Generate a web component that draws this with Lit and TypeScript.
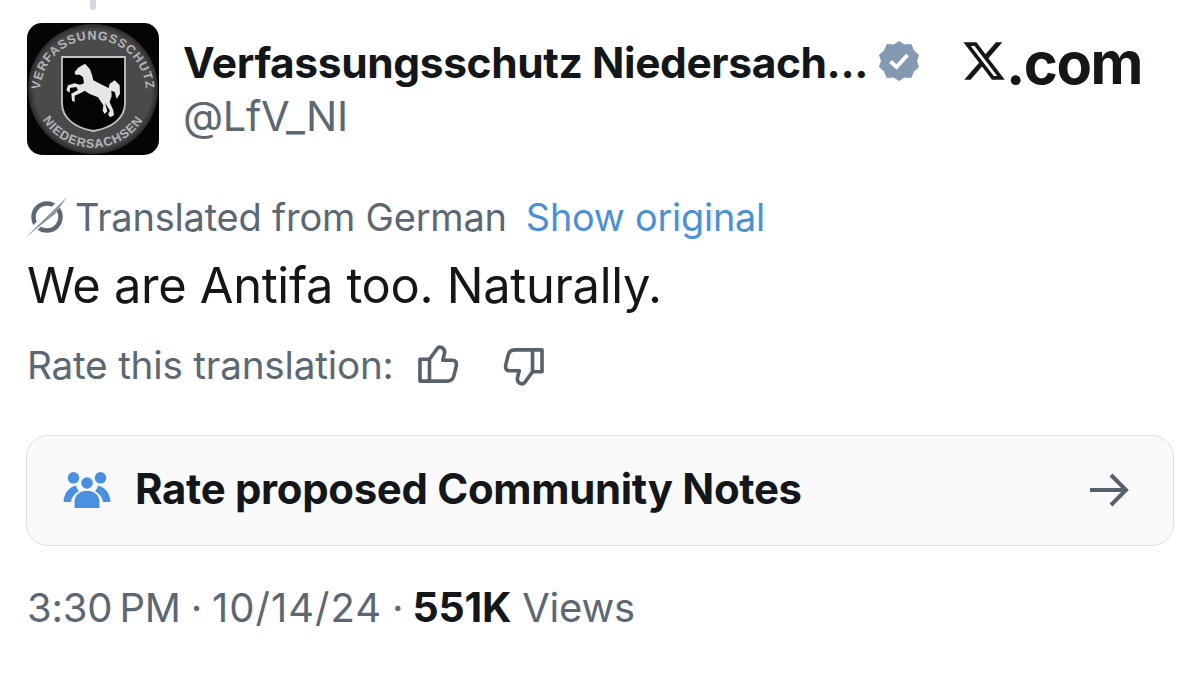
import { LitElement, html, css } from "lit";
import { customElement } from "lit/decorators.js";

const avatar = html`<svg class="avatar" viewBox="0 0 132 132" width="132" height="132">
  <defs>
    <path id="arcTop" d="M 15 84 A 53 53 0 1 1 117 84" />
    <path id="arcBottom" d="M 9 81 A 59 59 0 0 0 123 81" />
    <radialGradient id="disc"><stop offset="0" stop-color="#4a4a4c"/><stop offset=".9" stop-color="#4a4a4c"/><stop offset="1" stop-color="#2a2a2b"/></radialGradient>
  </defs>
  <rect width="132" height="132" rx="15" fill="#050505"/>
  <circle cx="66" cy="66" r="65" fill="url(#disc)"/>
  <text class="ring"><textPath href="#arcTop" startOffset="50%" text-anchor="middle">VERFASSUNGSSCHUTZ</textPath></text>
  <text class="ring"><textPath href="#arcBottom" startOffset="50%" text-anchor="middle">NIEDERSACHSEN</textPath></text>
  <path d="M35 34 H98 V80 C98 96 84 105 66.500 108 C49 105 35 96 35 80 Z" fill="#040404" stroke="#c4c4c4" stroke-width="1.800"/>
  <path transform="translate(31 29) scale(.3333)" fill="#e6e6e6" d="M52 68 L50 60 L60 48 L75 38 L82 36 L96 52 L102 68 L106 85 L135 100 L152 108 L155 95 L170 85 L185 100 L186 125 L176 141 L170 120 L160 116 L161 132 L155 150 L166 175 L168 190 L156 196 L150 186 L156 176 L141 152 L148 178 L140 186 L134 176 L136 160 L120 136 L95 126 L80 116 L70 122 L50 131 L50 150 L42 146 L40 125 L60 114 L55 105 L36 108 L35 122 L25 115 L30 100 L50 94 L66 98 L78 94 L75 75 L65 68 Z"/>
</svg>`;

const verified = html`<svg class="badge" viewBox="0 0 40 40" width="40" height="40">
  <path fill="#8499b2" d="M20 0.500 L25.500 4 L32 3.500 L34.500 9.500 L39.500 14 L37.500 20 L39.500 26 L34.500 30.500 L32 36.500 L25.500 36 L20 39.500 L14.500 36 L8 36.500 L5.500 30.500 L0.500 26 L2.500 20 L0.500 14 L5.500 9.500 L8 3.500 L14.500 4 Z" stroke="#8499b2" stroke-width="1" stroke-linejoin="round"/>
  <path d="M11.500 20.500 L17.500 26 L28.500 14" fill="none" stroke="#fff" stroke-width="4"/>
</svg>`;

const xLogo = html`<svg class="xlogo" viewBox="0 0 24 24" width="46" height="46" preserveAspectRatio="none">
  <path fill="#14171a" d="M18.244 2.250h3.308l-7.227 8.260 8.502 11.240H16.170l-5.214-6.817L4.990 21.750H1.680l7.730-8.835L1.254 2.250H8.080l4.713 6.231zm-1.161 17.520h1.833L7.084 4.126H5.117z"/>
</svg>`;

const translate = html`<svg class="ticon" viewBox="0 0 44 42" width="44" height="42">
  <circle cx="22" cy="21" r="13.500" fill="none" stroke="#5b6873" stroke-width="4.500"/>
  <path d="M1 41 L42 0" stroke="#fff" stroke-width="6.500"/>
  <path d="M1 41 L42 1 L30 18 Z" fill="#8b959d"/>
</svg>`;

const thumbPath = "M12 15 H2 V38 H12 Z M12 15 L20 4 C22 1 28 2 28 8 L26 16 H36 C40 16 41 19 40 23 L37.500 33 C36.500 37 34 38 30 38 H12";

const thumbUp = html`<svg viewBox="0 0 43 40" width="41" height="38"><path fill="none" stroke="#56616b" stroke-width="3.800" stroke-linejoin="round" d=${thumbPath}/></svg>`;

const thumbDown = html`<svg class="down" viewBox="0 0 43 40" width="41" height="38"><path fill="none" stroke="#56616b" stroke-width="3.800" stroke-linejoin="round" transform="rotate(180 21.500 20)" d=${thumbPath}/></svg>`;

const people = html`<svg class="people" viewBox="0 0 48 38" width="48" height="38">
  <g fill="#4a90e2">
    <circle cx="10.500" cy="5.800" r="5.800"/><circle cx="37.500" cy="5.800" r="5.800"/><circle cx="24" cy="11" r="5.800"/>
    <path d="M0.500 30 C1 22 5 15.500 13 13.500 C14 17 15 18 16 19 C11 22 8.500 26 8 30 Z"/>
    <path d="M47.500 30 C47 22 43 15.500 35 13.500 C34 17 33 18 32 19 C37 22 39.500 26 40 30 Z"/>
    <path d="M11.500 36 V30 C11.500 23 17 18.800 24 18.800 C31 18.800 36.500 23 36.500 30 V36 Z"/>
  </g>
</svg>`;

const arrow = html`<svg class="arrow" viewBox="0 0 42 36" width="42" height="36"><path d="M2 18 H38 M23 3 L38 18 L23 33" fill="none" stroke="#56616b" stroke-width="4"/></svg>`;

@customElement("app-root")
export class AppRoot extends LitElement {
  static styles = css`
    :host {
      display: block;
      width: 1200px;
      height: 673px;
      overflow: hidden;
      background: #fff;
      font-family: Inter, "Liberation Sans", sans-serif;
      color: #14171a;
    }
    .page { display: flex; flex-direction: column; padding: 0 26px 0 27px; position: relative; }
    .thread { position: absolute; left: 90px; top: 0; width: 6px; height: 10px; background: #cfd9de; border-radius: 0 0 3px 3px; }
    .header { display: flex; align-items: flex-start; margin-top: 23px; height: 132px; }
    .avatar { flex: none; display: block; }
    .ring { font: 700 12.500px "Liberation Sans", sans-serif; letter-spacing: .9px; fill: #b5b5b5; }
    .who { display: flex; flex-direction: column; margin-left: 24px; width: 737px; padding-top: 16px; flex: none; }
    .nameline { display: flex; align-items: center; height: 48px; }
    .name { font-size: 42.500px; font-weight: 700; letter-spacing: -0.4px; white-space: nowrap; line-height: 48px; }
    .badge { margin-left: 11px; flex: none; margin-top: -4px; }
    .handle { font-size: 41.500px; line-height: 44px; margin-top: 7px; color: #5b6873; letter-spacing: -0.3px; }
    .brand { display: flex; align-items: center; height: 48px; margin-top: 16px; margin-left: 41px; flex: none; }
    .dotcom { font-size: 58px; font-weight: 700; letter-spacing: -1.500px; line-height: 48px; margin-left: -1px; }
    .xlogo { flex: none; margin-top: -5px; }
    .transline { display: flex; align-items: center; height: 44px; margin-top: 40px; font-size: 38px; color: #5b6873; letter-spacing: -0.2px; white-space: nowrap; }
    .ticon { flex: none; margin-left: -2px; margin-right: 6px; }
    .show { color: #4a90d9; margin-left: 19px; font-size: 37.800px; }
    .body { font-size: 48.800px; line-height: 54px; margin-top: 20px; letter-spacing: -0.3px; white-space: nowrap; }
    .rate { display: flex; align-items: center; height: 44px; margin-top: 30px; font-size: 38.700px; color: #5b6873; letter-spacing: -0.2px; white-space: nowrap; }
    .thumbs { display: flex; align-items: flex-start; gap: 44px; margin-left: 24px; }
    .down { margin-top: 3px; }
    .note {
      display: flex; align-items: center; height: 109px; margin: 48px 0 0 -1px;
      border: 1px solid #dcdfe2; border-radius: 22px; background: #f9f9fa;
      padding: 0 43px 0 36px;
    }
    .arrow { margin-bottom: 1px; }
    .note-title { font-size: 41.900px; font-weight: 700; margin-left: 24px; flex: 1; letter-spacing: -0.3px; white-space: nowrap; padding-bottom: 4px; }
    .meta { display: flex; align-items: baseline; margin-top: 37px; height: 48px; font-size: 40px; line-height: 48px; color: #5b6873; letter-spacing: -0.2px; white-space: nowrap; }
    .sep { margin: 0 10px; }
    .date { letter-spacing: 1px; }
    .total { margin-left: -1px; }
    .views { margin-left: 11px; }
    .meta b { color: #14171a; font-weight: 700; font-size: 41px; }
  `;

  render() {
    return html`<div class="page">
      <div class="thread"></div>
      <div class="header">
        ${avatar}
        <div class="who">
          <div class="nameline"><span class="name">Verfassungsschutz Niedersach...</span>${verified}</div>
          <div class="handle">@LfV_NI</div>
        </div>
        <div class="brand">${xLogo}<span class="dotcom">.com</span></div>
      </div>
      <div class="transline">${translate}<span>Translated from German</span><span class="show">Show original</span></div>
      <div class="body">We are Antifa too. Naturally.</div>
      <div class="rate"><span>Rate this translation:</span><div class="thumbs">${thumbUp}${thumbDown}</div></div>
      <div class="note">${people}<span class="note-title">Rate proposed Community Notes</span>${arrow}</div>
      <div class="meta"><span>3:30\u202fPM</span><span class="sep">·</span><span class="date">10/14/24</span><span class="sep">·</span><b class="total">551K</b><span class="views">Views</span></div>
    </div>`;
  }
}
